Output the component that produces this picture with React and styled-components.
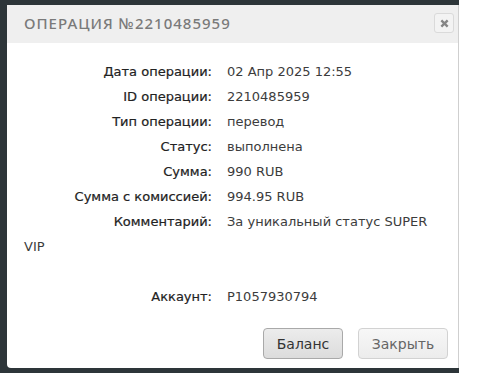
import React from "react";
import styled, { createGlobalStyle } from "styled-components";

const Global = createGlobalStyle`
  html, body { margin: 0; padding: 0; background: #fff; }
  * { box-sizing: border-box; }
`;

const Backdrop = styled.div`
  width: 459px;
  background: #2d3539;
  padding: 5px 0 5px 7px;
`;

const Dialog = styled.div`
  background: #fff;
  border-right: 1px solid #cfcfcf;
  border-radius: 0 0 0 4px;
  height: 363px;
  display: flex;
  flex-direction: column;
`;

const Header = styled.div`
  height: 38px;
  background: #efefef;
  display: flex;
  align-items: center;
  justify-content: space-between;
  padding: 0 4px 0 17px;
`;

const Title = styled.h2`
  margin: 0 0 2px 0;
  font-family: "Noto Sans", sans-serif;
  font-size: 15px;
  font-weight: 500;
  letter-spacing: 1px;
  color: #7a7a7a;
  text-transform: uppercase;
`;

const CloseX = styled.button`
  width: 20px;
  height: 20px;
  padding: 0;
  border: 1px solid #dadada;
  border-radius: 3px;
  background: #f3f3f3;
  display: flex;
  align-items: center;
  justify-content: center;
  margin-top: -2px;
`;

const Body = styled.div`
  padding: 16px 15px 0 17px;
  font-family: "DejaVu Sans", sans-serif;
  font-size: 13px;
  line-height: 25px;
  color: #333;
`;

const Row = styled.div`
  margin-top: ${(p) => (p.$gap ? "25px" : "0")};
`;

const Label = styled.span`
  display: inline-block;
  width: 188px;
  text-align: right;
  margin-right: 15px;
  color: #222;
  -webkit-text-stroke: 0.2px #222;
`;

const Value = styled.span`
  color: #3c3c3c;
`;

const Footer = styled.div`
  margin-top: auto;
  display: flex;
  justify-content: flex-end;
  gap: 15px;
  padding: 0 10px 9px 0;
`;

const Button = styled.button`
  height: 31px;
  width: ${(p) => p.$w}px;
  font-family: "DejaVu Sans", sans-serif;
  font-size: 14px;
  border-radius: 4px;
  border: 1px solid ${(p) => (p.$primary ? "#a9a9a9" : "#d2d2d2")};
  background: ${(p) =>
    p.$primary
      ? "linear-gradient(#ececec, #dcdcdc)"
      : "linear-gradient(#f7f7f7, #ececec)"};
  color: ${(p) => (p.$primary ? "#333" : "#666")};
  padding: 0;
`;

const rows = [
  ["Дата операции:", "02 Апр 2025 12:55"],
  ["ID операции:", "2210485959"],
  ["Тип операции:", "перевод"],
  ["Статус:", "выполнена"],
  ["Сумма:", "990 RUB"],
  ["Сумма с комиссией:", "994.95 RUB"],
  ["Комментарий:", "За уникальный статус SUPER VIP"],
];

export default function App() {
  return (
    <>
      <Global />
      <Backdrop>
        <Dialog>
          <Header>
            <Title>Операция №2210485959</Title>
            <CloseX aria-label="close">
              <svg width="9" height="9" viewBox="0 0 10 10">
                <path d="M1.5 1.5 L8.5 8.5 M8.5 1.5 L1.5 8.5" stroke="#858585" strokeWidth="2.6" strokeLinecap="butt" />
              </svg>
            </CloseX>
          </Header>
          <Body>
            {rows.map(([l, v]) => (
              <Row key={l}>
                <Label>{l}</Label>
                <Value>{v}</Value>
              </Row>
            ))}
            <Row $gap>
              <Label>Аккаунт:</Label>
              <Value>P1057930794</Value>
            </Row>
          </Body>
          <Footer>
            <Button $primary $w={80}>Баланс</Button>
            <Button $w={90}>Закрыть</Button>
          </Footer>
        </Dialog>
      </Backdrop>
    </>
  );
}
